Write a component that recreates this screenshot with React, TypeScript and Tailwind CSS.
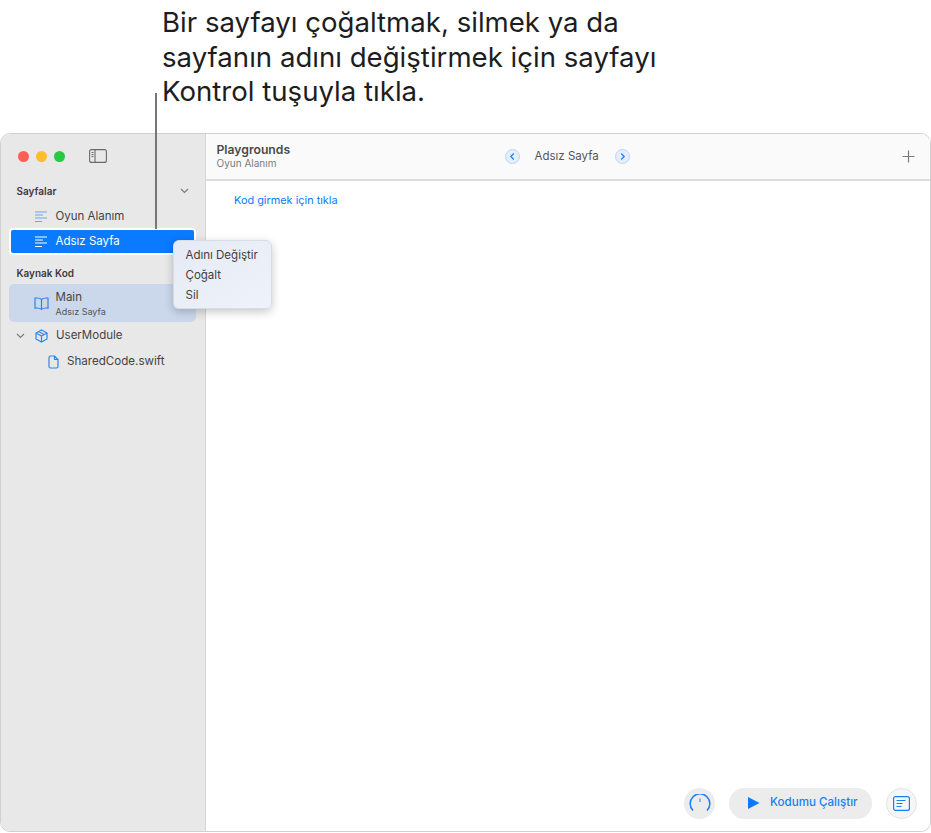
import React from "react";

const Lines = ({ color }: { color: string }) => (
  <svg width="14" height="12" viewBox="0 0 14 12" fill="none" stroke={color} strokeWidth="1.2">
    <path d="M1 1h12M1 4h8M1 7h12M1 10.500h7" />
  </svg>
);

export default function App() {
  return (
    <div className="relative w-[931px] h-[833px] bg-white overflow-hidden font-['Inter',sans-serif] text-[#3a3a3a]">
      <div className="pl-[162px] h-[133px] pt-[5px] text-[27.600px] leading-[34.500px] text-[#1d1d1f]">
        <p>Bir sayfayı çoğaltmak, silmek ya da</p>
        <p>sayfanın adını değiştirmek için sayfayı</p>
        <p>Kontrol tuşuyla tıkla.</p>
      </div>
      <div className="absolute left-[155px] top-[93px] w-[2px] h-[136px] bg-[#777777] z-10" />

      <div className="flex h-[699px] w-[931px] rounded-[10px] border-[1.5px] border-[#d0d0d0] overflow-hidden">
        <aside className="w-[204.500px] shrink-0 bg-[#e8e8e8] border-r border-[#d6d6d6] flex flex-col">
          <div className="flex items-center h-[41px] pl-[17px] pt-[3px]">
            <span className="w-[11px] h-[11px] rounded-full bg-[#ff5f57]" />
            <span className="w-[11px] h-[11px] rounded-full bg-[#febc2e] ml-[7px]" />
            <span className="w-[11px] h-[11px] rounded-full bg-[#28c840] ml-[7px]" />
            <svg className="ml-[24px]" width="18" height="14" viewBox="0 0 18 14" fill="none" stroke="#6a6a6a" strokeWidth="1.100">
              <rect x="0.600" y="0.600" width="16.800" height="12.800" rx="2" />
              <path d="M6 1v12M2.500 3.500h2M2.500 5.500h2M2.500 7.500h2" />
            </svg>
          </div>
          <div className="flex items-center justify-between h-[20px] mt-[6px] pl-[15.500px] pr-[16px]">
            <span className="text-[10px] font-semibold text-[#3c3c3c]">Sayfalar</span>
            <svg width="9" height="6" viewBox="0 0 9 6" fill="none" stroke="#7a7a7a" strokeWidth="1.200"><path d="M1 1l3.500 3.500L8 1" /></svg>
          </div>
          <div className="flex items-center h-[26px] mt-[3px] pl-[32.500px] gap-[8px] text-[11.500px]">
            <Lines color="#6ea6ea" />
            <span className="text-[#444]">Oyun Alanım</span>
          </div>
          <div className="flex items-center h-[23px] ml-[10px] mr-[11px] pl-[22.500px] gap-[8px] text-[11.500px] bg-[#0a7aff] rounded-[2px] ring-2 ring-white text-white">
            <Lines color="#ffffff" />
            <span>Adsız Sayfa</span>
          </div>
          <div className="h-[20px] mt-[10px] pl-[15.500px] flex items-center text-[10px] font-semibold text-[#3c3c3c]">Kaynak Kod</div>
          <div className="flex items-center h-[38px] mt-[1px] ml-[8px] mr-[9px] pl-[24.500px] gap-[7px] bg-[#cbd8ec] rounded-[5px]">
            <svg width="15" height="13" viewBox="0 0 15 13" fill="none" stroke="#2b85f0" strokeWidth="1.200">
              <path d="M7.500 2.500C6 1 3.500 .8 1 1.200v10c2.500-.4 5-.2 6.500 1.200 1.500-1.400 4-1.600 6.500-1.200v-10C11.500 .8 9 1 7.500 2.500zM7.500 2.500v9.800" />
            </svg>
            <div className="flex flex-col">
              <span className="text-[11.500px] leading-[15px] text-[#444]">Main</span>
              <span className="text-[9px] leading-[11px] mt-[1px] text-[#555]">Adsız Sayfa</span>
            </div>
          </div>
          <div className="flex items-center h-[26px] mt-[1px] pl-[15px] text-[11.500px]">
            <svg width="9" height="6" viewBox="0 0 9 6" fill="none" stroke="#7a7a7a" strokeWidth="1.200"><path d="M1 1l3.500 3.500L8 1" /></svg>
            <svg className="ml-[10px]" width="13" height="14" viewBox="0 0 13 14" fill="none" stroke="#2b85f0" strokeWidth="1.200">
              <path d="M6.500 1L12 4v6l-5.500 3L1 10V4zM1 4l5.500 3L12 4M6.500 7v6M3.500 2.500L9 5.500" />
            </svg>
            <span className="ml-[8px] text-[#444]">UserModule</span>
          </div>
          <div className="flex items-center h-[26px] pl-[47px] gap-[8px] text-[11.600px]">
            <svg width="11" height="14" viewBox="0 0 11 14" fill="none" stroke="#2b85f0" strokeWidth="1.200">
              <path d="M1 2.500A1.500 1.500 0 012.500 1H6.500L10 4.500v7A1.500 1.500 0 018.500 13h-6A1.500 1.500 0 011 11.500zM6.500 1v3.500H10" />
            </svg>
            <span className="text-[#444]">SharedCode.swift</span>
          </div>
        </aside>

        <main className="flex-1 flex flex-col bg-white min-w-0">
          <header className="relative flex items-center justify-between h-[47px] bg-[#fafafa] border-b-2 border-[#dcdcdc] pl-[11px] pr-[15px]">
            <div className="flex flex-col pb-[2px]">
              <span className="text-[12.200px] leading-[14px] font-semibold text-[#4a4a4a]">Playgrounds</span>
              <span className="text-[10px] leading-[12px] text-[#7b7b7b]">Oyun Alanım</span>
            </div>
            <div className="absolute left-[299px] top-0 h-full flex items-center">
              <svg width="15" height="15" viewBox="0 0 15 15" fill="#e4eefc" stroke="#b9d5fa" strokeWidth="1">
                <circle cx="7.500" cy="7.500" r="7" />
                <path d="M8.800 4.500l-3 3 3 3" fill="none" stroke="#1a7ff5" strokeWidth="1.200" />
              </svg>
              <span className="ml-[15px] w-[80px] text-[11.500px] text-[#555]">Adsız Sayfa</span>
              <svg width="15" height="15" viewBox="0 0 15 15" fill="#e4eefc" stroke="#b9d5fa" strokeWidth="1">
                <circle cx="7.500" cy="7.500" r="7" />
                <path d="M6.200 4.500l3 3-3 3" fill="none" stroke="#1a7ff5" strokeWidth="1.200" />
              </svg>
            </div>
            <svg width="13" height="13" viewBox="0 0 13 13" fill="none" stroke="#7a7a7a" strokeWidth="1.200"><path d="M6.500 .5v12M.5 6.500h12" /></svg>
          </header>
          <div className="flex-1 pl-[28.500px] pt-[11px] text-[10.900px] leading-[16px] text-[#0a7aff]">Kod girmek için tıkla</div>
          <div className="flex items-center justify-end h-[44px] mb-[6px] pr-[13px]">
            <div className="w-[31px] h-[31px] rounded-full bg-[#ececec] flex items-center justify-center">
              <svg width="22" height="18" viewBox="0 0 22 18" fill="none" stroke="#1a7ff5" strokeWidth="1.500">
                <path d="M4 16.500A9.800 9.800 0 1118 16.500" />
                <path d="M11 4.500v3.500" strokeWidth="1" />
              </svg>
            </div>
            <div className="ml-[14px] w-[143px] h-[31px] rounded-full bg-[#ececec] flex items-center pl-[18px] font-medium text-[#1a7ff5]">
              <svg width="13" height="14" viewBox="0 0 13 14" fill="#0a7aff"><path d="M1 1l11.500 6L1 13z" /></svg>
              <span className="ml-[10px] text-[11.600px]">Kodumu Çalıştır</span>
            </div>
            <div className="ml-[14px] w-[31px] h-[31px] rounded-full bg-[#f6f6f6] border border-[#e4e4e4] flex items-center justify-center">
              <svg width="17" height="15" viewBox="0 0 17 15" fill="none" stroke="#1a7ff5" strokeWidth="1.200">
                <rect x="0.600" y="0.600" width="15.800" height="13.800" rx="2" />
                <path d="M3.500 4.500h9M3.500 7.500h6M3.500 10.500h5" />
              </svg>
            </div>
          </div>
        </main>
      </div>

      <div className="absolute left-[173px] top-[240px] w-[99px] h-[69px] rounded-[6px] bg-gradient-to-br from-[#e6eaf4] to-[#eef2fa] border border-[#d8dde5] shadow-[0_3px_10px_rgba(0,0,0,0.22)] pl-[11.500px] pt-[4px] text-[11.500px] leading-[20px] text-[#3f3f3f] z-20">
        <p>Adını Değiştir</p>
        <p>Çoğalt</p>
        <p>Sil</p>
      </div>
    </div>
  );
}
